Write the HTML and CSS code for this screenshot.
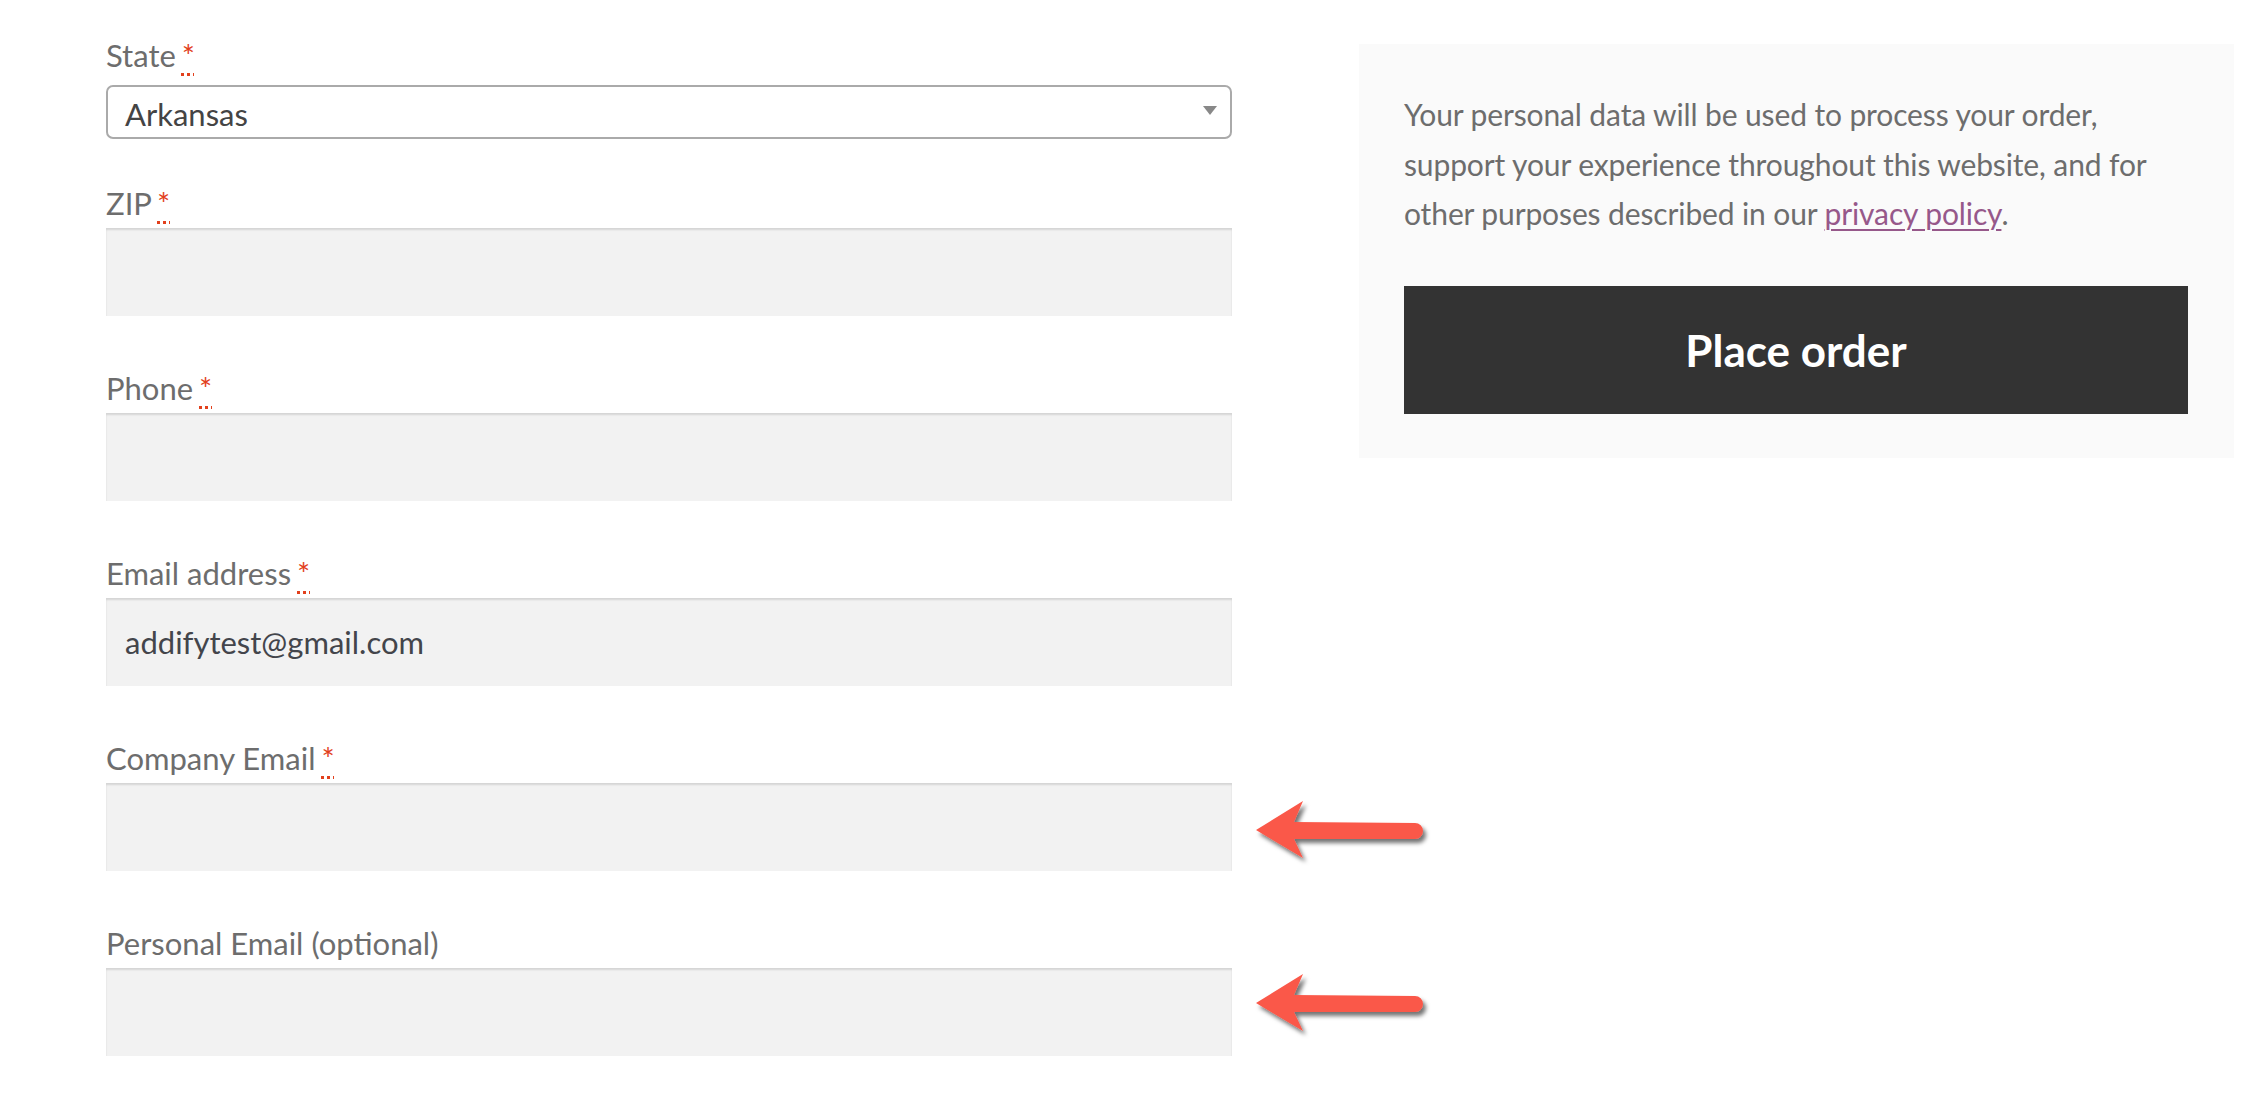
FILE: index.html
```html
<!DOCTYPE html>
<html lang="en">
<head>
<meta charset="utf-8">
<title>Checkout</title>
<link rel="stylesheet" href="styles.css">
</head>
<body>
<div class="page">
  <form class="billing">
    <div class="field field-select">
      <label class="field-label">State&nbsp;<abbr class="required" title="required">*</abbr></label>
      <div class="select">
        <span class="select-value">Arkansas</span>
        <span class="caret"></span>
      </div>
    </div>
    <div class="field">
      <label class="field-label">ZIP&nbsp;<abbr class="required" title="required">*</abbr></label>
      <div class="input"></div>
    </div>
    <div class="field">
      <label class="field-label">Phone&nbsp;<abbr class="required" title="required">*</abbr></label>
      <div class="input"></div>
    </div>
    <div class="field">
      <label class="field-label">Email address&nbsp;<abbr class="required" title="required">*</abbr></label>
      <div class="input"><span class="input-value">addifytest@gmail.com</span></div>
    </div>
    <div class="field">
      <label class="field-label">Company Email&nbsp;<abbr class="required" title="required">*</abbr></label>
      <div class="input"></div>
      <svg class="arrow" viewBox="0 0 185 70" width="185" height="70" aria-hidden="true">
        <defs>
          <filter id="sh1" x="-10%" y="-20%" width="130%" height="160%">
            <feDropShadow dx="3" dy="4" stdDeviation="2" flood-color="#000" flood-opacity="0.55"/>
          </filter>
        </defs>
        <path d="M6,33 L53,4 L44,25 L165,26 A8,8 0 0 1 165,42 L44,42 L53,61 Z" fill="#fa5849" filter="url(#sh1)"/>
      </svg>
    </div>
    <div class="field">
      <label class="field-label">Personal Email (optional)</label>
      <div class="input"></div>
      <svg class="arrow arrow-up" viewBox="0 0 185 70" width="185" height="70" aria-hidden="true">
        <path d="M6,33 L53,4 L44,25 L165,26 A8,8 0 0 1 165,42 L44,42 L53,61 Z" fill="#fa5849" filter="url(#sh1)"/>
      </svg>
    </div>
  </form>
  <div class="review">
    <p class="privacy">Your personal data will be used to process your order, support your experience throughout this website, and for other purposes described in our <a href="#" class="privacy-link">privacy policy</a>.</p>
    <button type="button" class="place-order">Place order</button>
  </div>
</div>
</body>
</html>
```
FILE: styles.css
```css
html, body {
  margin: 0;
  padding: 0;
  background: #ffffff;
}

body {
  font-family: Lato, "Liberation Sans", sans-serif;
  color: #6d6d6d;
}

.page {
  display: flex;
  align-items: flex-start;
  padding-left: 106px;
}

.billing {
  width: 1126px;
  flex-shrink: 0;
  padding-top: 30px;
  margin: 0;
}

.field {
  position: relative;
  margin-bottom: 47px;
}

.field-select {
  margin-bottom: 39px;
}

.field-label {
  display: block;
  font-size: 31px;
  line-height: 50px;
  color: #6d6d6d;
}

.field-select .field-label {
  margin-bottom: 5px;
}

.required {
  color: #e2401c;
  text-decoration: underline dotted;
  text-decoration-thickness: 3px;
  text-underline-offset: 6px;
  font-weight: 400;
  margin-left: -2px;
}

.select {
  height: 54px;
  box-sizing: border-box;
  border: 2px solid #aaaaaa;
  border-radius: 7px;
  background: #ffffff;
  display: flex;
  align-items: center;
  justify-content: space-between;
  padding: 3px 13px 0 17px;
}

.select-value {
  font-size: 31px;
  color: #444444;
}

.caret {
  width: 0;
  height: 0;
  border-left: 7px solid transparent;
  border-right: 7px solid transparent;
  border-top: 9px solid #888888;
  margin-top: -6px;
}

.input {
  height: 88px;
  box-sizing: border-box;
  background: #f2f2f2;
  box-shadow: inset 0 2px 2px rgba(0, 0, 0, 0.12);
  display: flex;
  align-items: center;
  padding: 0 19px;
}

.input-value {
  font-size: 31px;
  color: #43454b;
}

.arrow {
  position: absolute;
  left: calc(100% + 18px);
  top: 64px;
  overflow: visible;
}

.arrow-up {
  top: 52px;
}

.review {
  margin-left: 127px;
  margin-top: 44px;
  width: 875px;
  box-sizing: border-box;
  background: #fafafa;
  padding: 46px 46px 44px 45px;
}

.privacy {
  margin: 0 0 47px;
  font-size: 30px;
  line-height: 49.5px;
  letter-spacing: -0.12px;
  color: #6d6d6d;
}

.privacy-link {
  color: #96588a;
  text-decoration: underline;
  text-decoration-thickness: 2px;
  text-underline-offset: 4px;
}

.place-order {
  display: block;
  width: 100%;
  height: 128px;
  border: 0;
  background: #333333;
  color: #ffffff;
  font-family: Lato, "Liberation Sans", sans-serif;
  font-weight: 700;
  font-size: 44px;
  cursor: pointer;
}
```
